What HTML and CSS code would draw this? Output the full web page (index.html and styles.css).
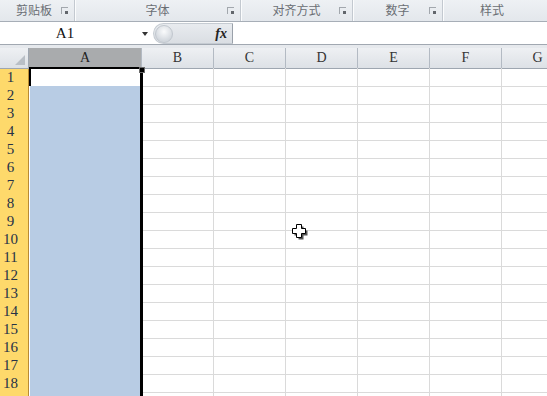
FILE: index.html
```html
<!DOCTYPE html>
<html lang="zh">
<head>
    <meta charset="UTF-8">
    <title>Excel</title>
    <link rel="stylesheet" href="styles.css">
</head>
<body>
    <div class="ribbon">
        <div class="group g1">剪贴板<span class="launcher"></span></div>
        <div class="group g2">字体<span class="launcher"></span></div>
        <div class="group g3">对齐方式<span class="launcher"></span></div>
        <div class="group g4">数字<span class="launcher"></span></div>
        <div class="group g5">样式</div>
    </div>

    <div class="formula">
        <div class="namebox">
            <span class="name">A1</span>
            <span class="arrow"></span>
        </div>
        <div class="pill">
            <span class="knob"></span>
            <span class="fx">fx</span>
        </div>
        <div class="input"></div>
    </div>
    <div class="spacer"></div>

    <div class="sheet">
        <div class="row head"><div class="corner"></div><div class="col sel">A</div><div class="col">B</div><div class="col">C</div><div class="col">D</div><div class="col">E</div><div class="col">F</div><div class="col">G</div></div>
        <div class="row"><div class="num">1</div><div class="cell active"></div><div class="cell"></div><div class="cell"></div><div class="cell"></div><div class="cell"></div><div class="cell"></div><div class="cell"></div></div>
        <div class="row"><div class="num">2</div><div class="cell blue"></div><div class="cell"></div><div class="cell"></div><div class="cell"></div><div class="cell"></div><div class="cell"></div><div class="cell"></div></div>
        <div class="row"><div class="num">3</div><div class="cell blue"></div><div class="cell"></div><div class="cell"></div><div class="cell"></div><div class="cell"></div><div class="cell"></div><div class="cell"></div></div>
        <div class="row"><div class="num">4</div><div class="cell blue"></div><div class="cell"></div><div class="cell"></div><div class="cell"></div><div class="cell"></div><div class="cell"></div><div class="cell"></div></div>
        <div class="row"><div class="num">5</div><div class="cell blue"></div><div class="cell"></div><div class="cell"></div><div class="cell"></div><div class="cell"></div><div class="cell"></div><div class="cell"></div></div>
        <div class="row"><div class="num">6</div><div class="cell blue"></div><div class="cell"></div><div class="cell"></div><div class="cell"></div><div class="cell"></div><div class="cell"></div><div class="cell"></div></div>
        <div class="row"><div class="num">7</div><div class="cell blue"></div><div class="cell"></div><div class="cell"></div><div class="cell"></div><div class="cell"></div><div class="cell"></div><div class="cell"></div></div>
        <div class="row"><div class="num">8</div><div class="cell blue"></div><div class="cell"></div><div class="cell"></div><div class="cell"></div><div class="cell"></div><div class="cell"></div><div class="cell"></div></div>
        <div class="row"><div class="num">9</div><div class="cell blue"></div><div class="cell"></div><div class="cell"></div><div class="cell"></div><div class="cell"></div><div class="cell"></div><div class="cell"></div></div>
        <div class="row"><div class="num">10</div><div class="cell blue"></div><div class="cell"></div><div class="cell"></div><div class="cell"></div><div class="cell"></div><div class="cell"></div><div class="cell"></div></div>
        <div class="row"><div class="num">11</div><div class="cell blue"></div><div class="cell"></div><div class="cell"></div><div class="cell"></div><div class="cell"></div><div class="cell"></div><div class="cell"></div></div>
        <div class="row"><div class="num">12</div><div class="cell blue"></div><div class="cell"></div><div class="cell"></div><div class="cell"></div><div class="cell"></div><div class="cell"></div><div class="cell"></div></div>
        <div class="row"><div class="num">13</div><div class="cell blue"></div><div class="cell"></div><div class="cell"></div><div class="cell"></div><div class="cell"></div><div class="cell"></div><div class="cell"></div></div>
        <div class="row"><div class="num">14</div><div class="cell blue"></div><div class="cell"></div><div class="cell"></div><div class="cell"></div><div class="cell"></div><div class="cell"></div><div class="cell"></div></div>
        <div class="row"><div class="num">15</div><div class="cell blue"></div><div class="cell"></div><div class="cell"></div><div class="cell"></div><div class="cell"></div><div class="cell"></div><div class="cell"></div></div>
        <div class="row"><div class="num">16</div><div class="cell blue"></div><div class="cell"></div><div class="cell"></div><div class="cell"></div><div class="cell"></div><div class="cell"></div><div class="cell"></div></div>
        <div class="row"><div class="num">17</div><div class="cell blue"></div><div class="cell"></div><div class="cell"></div><div class="cell"></div><div class="cell"></div><div class="cell"></div><div class="cell"></div></div>
        <div class="row"><div class="num">18</div><div class="cell blue"></div><div class="cell"></div><div class="cell"></div><div class="cell"></div><div class="cell"></div><div class="cell"></div><div class="cell"></div></div>
        <div class="row"><div class="num"></div><div class="cell blue"></div><div class="cell"></div><div class="cell"></div><div class="cell"></div><div class="cell"></div><div class="cell"></div><div class="cell"></div></div>

        <!-- selection frame + fill handle -->
        <div class="sel-right"></div>
        <div class="handle"></div>

        <svg class="cursor" width="16" height="16" viewBox="0 0 16 16">
            <path d="M5.5 1.5h5v4h4v5h-4v4h-5v-4h-4v-5h4z" fill="#555" transform="translate(1 1)"/>
            <path d="M5.5 1.5h5v4h4v5h-4v4h-5v-4h-4v-5h4z" fill="#fff" stroke="#000" stroke-width="1" transform="translate(-1 -1)"/>
        </svg>
    </div>
</body>
</html>
```

FILE: styles.css
```css
* {
    box-sizing: border-box;
}
body {
    margin: 0;
    width: 547px;
    height: 396px;
    overflow: hidden;
    background: #fff;
    font-family: "Liberation Serif", serif;
}

/* ribbon group labels */
.ribbon {
    display: flex;
    height: 22px;
    background: linear-gradient(#eef1f4, #e3e7ec);
    border-bottom: 1px solid #a7aeb7;
}
.group {
    position: relative;
    height: 21px;
    line-height: 20px;
    text-align: center;
    font-family: "Noto Sans CJK SC", sans-serif;
    font-size: 12px;
    color: #6a6e74;
    border-right: 1px solid #c3c9d0;
    box-shadow: 1px 0 0 #fbfcfd;
}
.g1 { width: 75px; padding-right: 6px; }
.g2 { width: 166px; }
.g3 { width: 112px; }
.g4 { width: 90px; }
.g5 { flex: 1; border-right: none; box-shadow: none; padding-right: 6px; }
.launcher {
    position: absolute;
    right: 6px;
    top: 7px;
    width: 7px;
    height: 7px;
    border-top: 1px solid #a2a7ad;
    border-left: 1px solid #a2a7ad;
}
.launcher::after {
    content: "";
    position: absolute;
    right: 0;
    bottom: 0;
    width: 3px;
    height: 3px;
    background: #62666c;
}

/* formula bar */
.formula {
    display: flex;
    height: 22px;
    margin-top: 1px;
    border-bottom: 1px solid #a1a8b1;
}
.namebox {
    width: 150px;
    display: flex;
    align-items: center;
}
.name {
    width: 130px;
    text-align: center;
    font-size: 15px;
    color: #111;
}
.arrow {
    margin-left: 12px;
    width: 0;
    height: 0;
    border-left: 3px solid transparent;
    border-right: 3px solid transparent;
    border-top: 4px solid #333;
}
.pill {
    width: 80px;
    margin-left: 3px;
    display: flex;
    align-items: center;
    justify-content: space-between;
    background: linear-gradient(#e8ebef, #dadee3);
    border-radius: 11px 0 0 11px;
    border: 1px solid #c5cbd2;
    border-right: 1px solid #9aa1aa;
    padding: 0 5px 0 1px;
}
.knob {
    width: 18px;
    height: 18px;
    border-radius: 50%;
    background: radial-gradient(circle at 50% 35%, #fafbfc, #d3d8de 70%);
    border: 1px solid #c1c7ce;
}
.fx {
    font-style: italic;
    font-weight: bold;
    font-size: 14px;
    color: #222;
}
.input {
    flex: 1;
}
.spacer {
    height: 3px;
    background: #e6e9ed;
}

/* sheet */
.sheet {
    position: relative;
    overflow: hidden;
    height: 349px;
}
.row {
    display: grid;
    grid-template-columns: 29px 113px repeat(6, 72px);
    height: 18px;
}
.row.head {
    height: 20px;
}
.corner,
.col {
    background: linear-gradient(#eef0f3, #dde1e6);
    border-right: 1px solid #b3bac3;
    border-bottom: 1px solid #9ea6b0;
    text-align: center;
    font-size: 14px;
    line-height: 20px;
    color: #333;
}
.corner {
    position: relative;
    border-right-color: #9ea6b0;
}
.corner::after {
    content: "";
    position: absolute;
    right: 3px;
    bottom: 3px;
    border-left: 10px solid transparent;
    border-bottom: 10px solid #b9bfc6;
}
.col.sel {
    background: #a9abad;
    color: #222;
}
.num {
    background: #fed96b;
    border-right: 1px solid #b98a35;
    border-bottom: 1px solid #d7a24a;
    font-size: 15px;
    line-height: 18px;
    color: #273247;
    text-align: center;
    padding-right: 7px;
}
.cell {
    border-right: 1px solid #dadada;
    border-bottom: 1px solid #dadada;
}
.cell.blue {
    background: #b8cce4;
    border-left: 1px solid #fff;
    border-bottom-color: #d7dbe0;
}
.cell.active {
    border-left: 2px solid #000;
    border-top: 2px solid #000;
    margin-top: -1px;
}

.sel-right {
    position: absolute;
    left: 140px;
    top: 19px;
    bottom: 0;
    width: 3px;
    background: #000;
}
.handle {
    position: absolute;
    left: 139px;
    top: 19px;
    width: 6px;
    height: 6px;
    background: #000;
    border: 1px solid #6a6a6a;
}
.cursor {
    position: absolute;
    left: 292px;
    top: 176px;
}
```
